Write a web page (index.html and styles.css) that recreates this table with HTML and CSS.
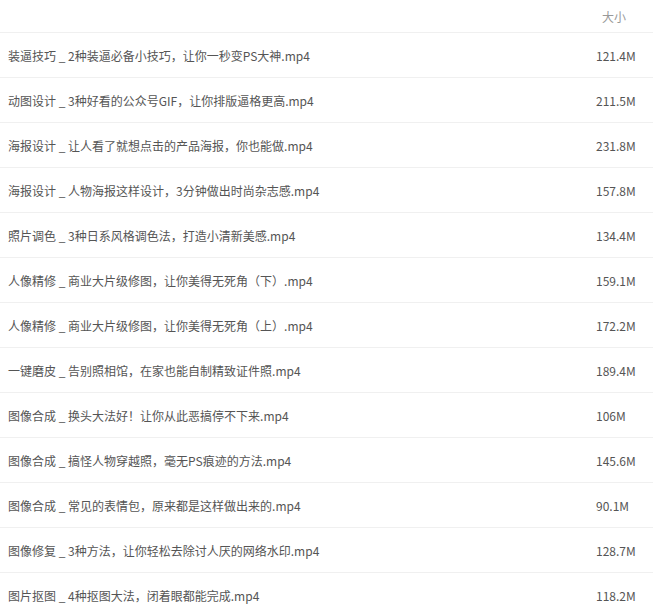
FILE: index.html
```html
<!DOCTYPE html>
<html lang="zh-CN">
<head>
  <meta charset="UTF-8">
  <meta name="viewport" content="width=device-width, initial-scale=1.0">
  <title>文件列表</title>
  <link rel="stylesheet" href="styles.css">
</head>
<body>
  <table class="file-table">
    <thead>
      <tr>
        <th class="col-name"></th>
        <th class="col-size">大小</th>
      </tr>
    </thead>
    <tbody>
      <tr><td class="col-name">装逼技巧 _ 2种装逼必备小技巧，让你一秒变PS大神.mp4</td><td class="col-size">121.4M</td></tr>
      <tr><td class="col-name">动图设计 _ 3种好看的公众号GIF，让你排版逼格更高.mp4</td><td class="col-size">211.5M</td></tr>
      <tr><td class="col-name">海报设计 _ 让人看了就想点击的产品海报，你也能做.mp4</td><td class="col-size">231.8M</td></tr>
      <tr><td class="col-name">海报设计 _ 人物海报这样设计，3分钟做出时尚杂志感.mp4</td><td class="col-size">157.8M</td></tr>
      <tr><td class="col-name">照片调色 _ 3种日系风格调色法，打造小清新美感.mp4</td><td class="col-size">134.4M</td></tr>
      <tr><td class="col-name">人像精修 _ 商业大片级修图，让你美得无死角（下）.mp4</td><td class="col-size">159.1M</td></tr>
      <tr><td class="col-name">人像精修 _ 商业大片级修图，让你美得无死角（上）.mp4</td><td class="col-size">172.2M</td></tr>
      <tr><td class="col-name">一键磨皮 _ 告别照相馆，在家也能自制精致证件照.mp4</td><td class="col-size">189.4M</td></tr>
      <tr><td class="col-name">图像合成 _ 换头大法好！让你从此恶搞停不下来.mp4</td><td class="col-size">106M</td></tr>
      <tr><td class="col-name">图像合成 _ 搞怪人物穿越照，毫无PS痕迹的方法.mp4</td><td class="col-size">145.6M</td></tr>
      <tr><td class="col-name">图像合成 _ 常见的表情包，原来都是这样做出来的.mp4</td><td class="col-size">90.1M</td></tr>
      <tr><td class="col-name">图像修复 _ 3种方法，让你轻松去除讨人厌的网络水印.mp4</td><td class="col-size">128.7M</td></tr>
      <tr><td class="col-name">图片抠图 _ 4种抠图大法，闭着眼都能完成.mp4</td><td class="col-size">118.2M</td></tr>
    </tbody>
  </table>
</body>
</html>
```

FILE: styles.css
```css
body {
  font-family: "Noto Sans CJK SC", "Noto Sans", sans-serif;
  background-color: #fff;
  color: #555;
  margin: 0;
  padding: 0;
}

.file-table {
  width: 100%;
  border-collapse: collapse;
  font-size: 12px;
}

.file-table th {
  height: 32px;
  padding: 0;
  font-weight: normal;
  color: #999;
  text-align: left;
  vertical-align: middle;
}

.file-table td {
  height: 44px;
  padding: 0;
  border-top: 1px solid #f0f0f0;
  vertical-align: middle;
}

.file-table .col-name {
  padding-left: 8px;
}

.col-size {
  width: 57px;
}

th.col-size {
  text-indent: 6px;
}
```
